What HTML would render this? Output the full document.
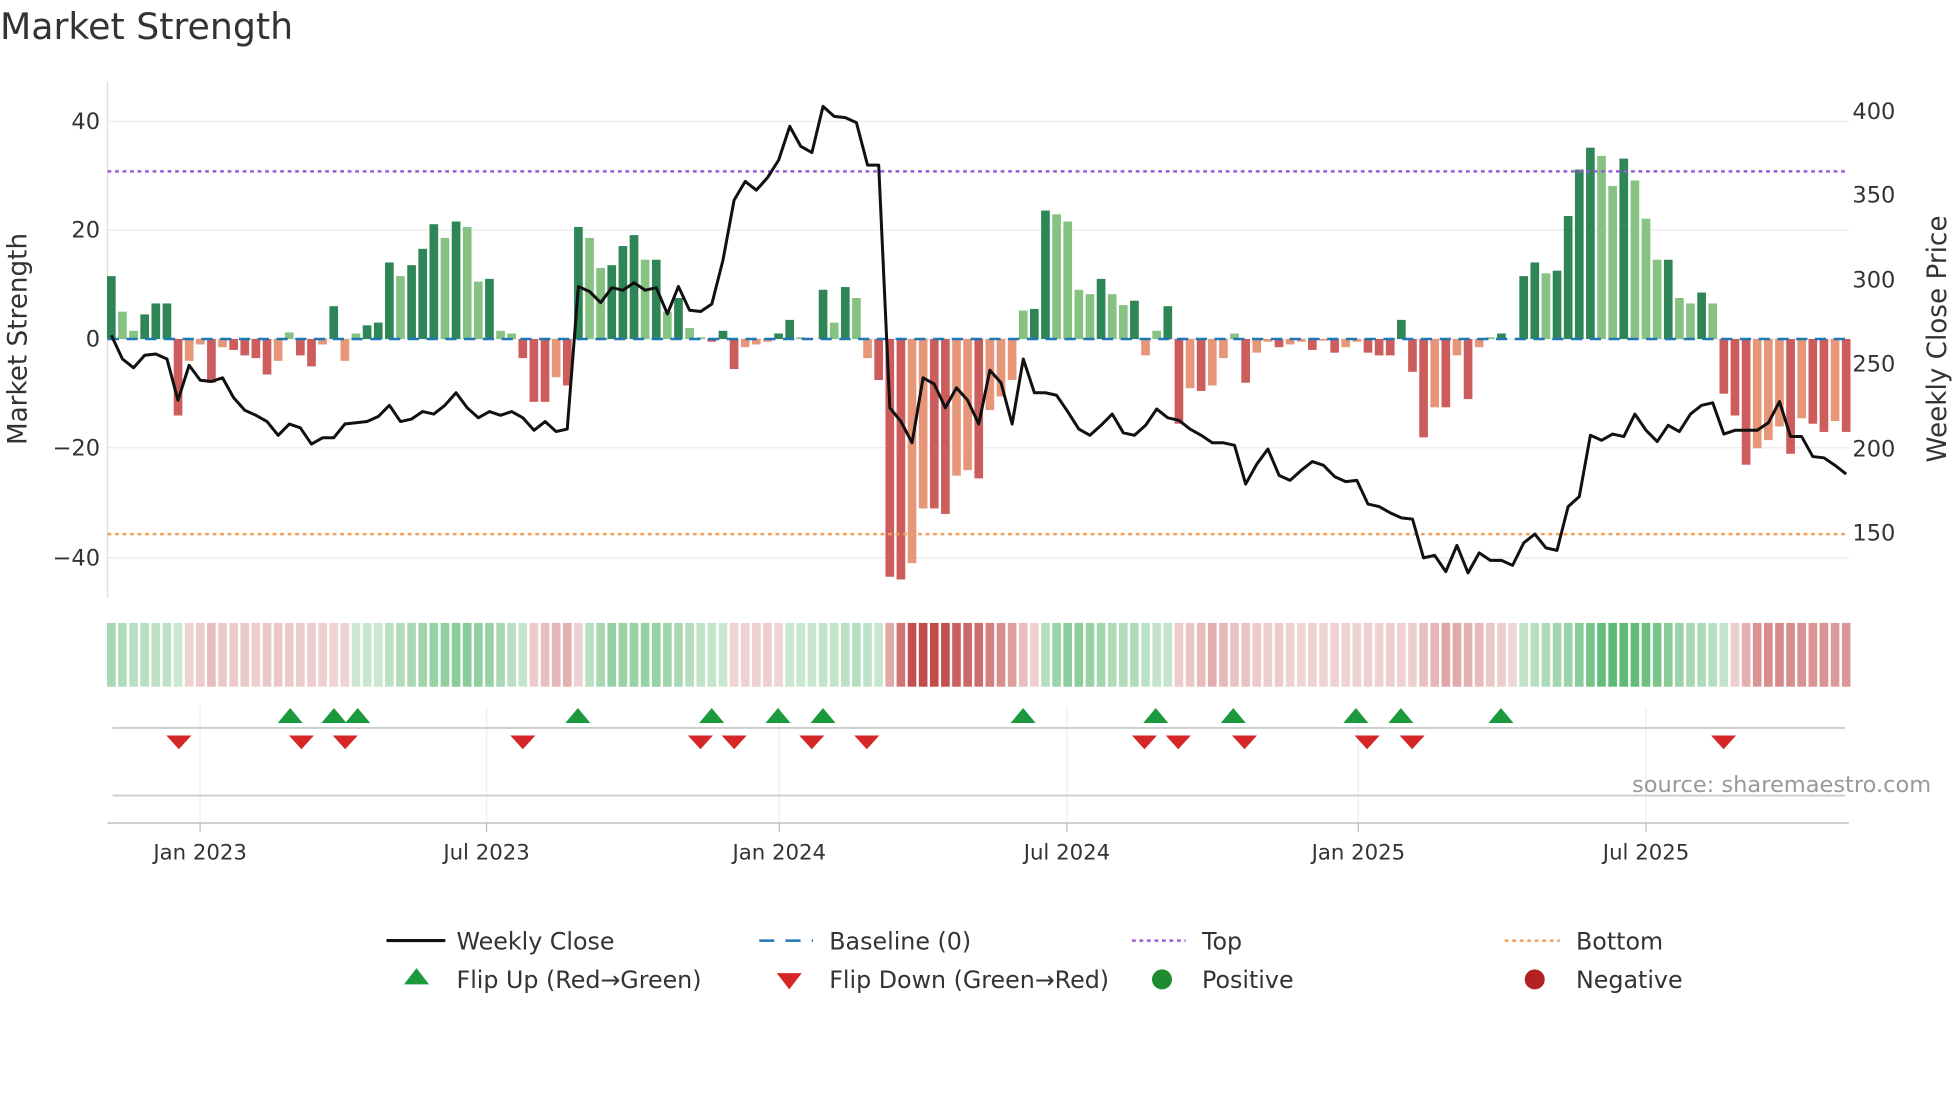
<!DOCTYPE html>
<html><head><meta charset="utf-8"><style>
html,body{margin:0;padding:0;background:#fff;width:1960px;height:1102px;overflow:hidden}
svg{display:block}
text{font-family:"DejaVu Sans","Liberation Sans",sans-serif;fill:#333}
</style></head><body>
<svg id="s" width="1960" height="1102" viewBox="0 0 1567 881" xmlns="http://www.w3.org/2000/svg">
<rect width="1567" height="881" fill="#fff"/>
<text x="0" y="31" font-size="29">Market Strength</text>
<g stroke="#ebebeb" stroke-width="1">
<line x1="86" x2="1478" y1="97" y2="97"/><line x1="86" x2="1478" y1="184" y2="184"/>
<line x1="86" x2="1478" y1="358" y2="358"/><line x1="86" x2="1478" y1="446" y2="446"/>
<line x1="86" x2="1478" y1="271" y2="271"/>
</g>
<line x1="86" x2="86" y1="65" y2="478" stroke="#ddd"/>
<g font-size="18" text-anchor="end">
<text x="80" y="103">40</text><text x="80" y="190">20</text><text x="80" y="277">0</text>
<text x="80" y="364">−20</text><text x="80" y="452">−40</text>
</g>
<g font-size="18">
<text x="1481" y="95">400</text><text x="1481" y="162">350</text><text x="1481" y="230">300</text>
<text x="1481" y="297">250</text><text x="1481" y="365">200</text><text x="1481" y="432">150</text>
</g>
<text transform="translate(21,271) rotate(-90)" font-size="21" text-anchor="middle">Market Strength</text>
<text transform="translate(1556,271) rotate(-90)" font-size="21" text-anchor="middle">Weekly Close Price</text>
<g id="bars"></g>
<line x1="86" x2="1478" y1="271" y2="271" stroke="#1f77b4" stroke-width="2" stroke-dasharray="9,6" id="base"/>
<line x1="86" x2="1478" y1="137" y2="137" stroke="#9b59d9" stroke-width="2" stroke-dasharray="3,3"/>
<line x1="86" x2="1478" y1="427" y2="427" stroke="#f0a05a" stroke-width="2" stroke-dasharray="3,3"/>
<polyline id="price" fill="none" stroke="#111" stroke-width="2.4" stroke-linejoin="round"/>
<g id="strip"></g>
<g stroke="#eee">
<line x1="160" x2="160" y1="565" y2="658"/><line x1="389" x2="389" y1="565" y2="658"/>
<line x1="623" x2="623" y1="565" y2="658"/><line x1="853" x2="853" y1="565" y2="658"/>
<line x1="1086" x2="1086" y1="565" y2="658"/><line x1="1316" x2="1316" y1="565" y2="658"/>
</g>
<line x1="90" x2="1475" y1="582" y2="582" stroke="#ccc" stroke-width="1.5"/>
<line x1="90" x2="1475" y1="636" y2="636" stroke="#ccc" stroke-width="1.5"/>
<line x1="86" x2="1478" y1="658" y2="658" stroke="#ccc" stroke-width="1.5"/>
<g stroke="#bbb"><line x1="160" x2="160" y1="658" y2="665"/><line x1="389" x2="389" y1="658" y2="665"/><line x1="623" x2="623" y1="658" y2="665"/><line x1="853" x2="853" y1="658" y2="665"/><line x1="1086" x2="1086" y1="658" y2="665"/><line x1="1316" x2="1316" y1="658" y2="665"/></g>
<g font-size="17" text-anchor="middle">
<text x="160" y="687">Jan 2023</text><text x="389" y="687">Jul 2023</text><text x="623" y="687">Jan 2024</text>
<text x="853" y="687">Jul 2024</text><text x="1086" y="687">Jan 2025</text><text x="1316" y="687">Jul 2025</text>
</g>
<g id="marks"></g>
<text x="1544" y="633" font-size="18" text-anchor="end" style="fill:#999">source: sharemaestro.com</text>
<g font-size="19">
<line x1="309" x2="356" y1="752" y2="752" stroke="#111" stroke-width="2.5"/><text x="365" y="759">Weekly Close</text>
<line x1="607" x2="650" y1="752" y2="752" stroke="#1f77b4" stroke-width="2" stroke-dasharray="12,9"/><text x="663" y="759">Baseline (0)</text>
<line x1="905" x2="948" y1="752" y2="752" stroke="#9b59d9" stroke-width="2" stroke-dasharray="3,3"/><text x="961" y="759">Top</text>
<line x1="1203" x2="1247" y1="752" y2="752" stroke="#f0a05a" stroke-width="2" stroke-dasharray="3,3"/><text x="1260" y="759">Bottom</text>
<path d="M333,774 L343,787 L323,787Z" fill="#1a9a3c"/><text x="365" y="790">Flip Up (Red→Green)</text>
<path d="M621,778 L641,778 L631,791Z" fill="#d62728"/><text x="663" y="790">Flip Down (Green→Red)</text>
<circle cx="929" cy="783" r="8" fill="#1e8c2e"/><text x="961" y="790">Positive</text>
<circle cx="1227" cy="783" r="8" fill="#b22222"/><text x="1260" y="790">Negative</text>
</g>
</svg>
<script>
var v=[11.5,5,1.5,4.5,6.5,6.5,-14,-4,-1,-8,-1.5,-2,-3,-3.5,-6.5,-4,1.2,-3,-5,-1,6,-4,1,2.5,3,14,11.5,13.5,16.5,21,18.5,21.5,20.5,10.5,11,1.5,1,-3.5,-11.5,-11.5,-7,-8.5,20.5,18.5,13,13.5,17,19,14.5,14.5,5,7.5,2,0.3,-0.5,1.5,-5.5,-1.5,-1,-0.5,1,3.5,0.3,0,9,3,9.5,7.5,-3.5,-7.5,-43.5,-44,-41,-31,-31,-32,-25,-24,-25.5,-13,-10.5,-7.5,5.2,5.5,23.5,22.8,21.5,9,8.2,11,8.2,6.2,7,-3,1.5,6,-15.5,-9,-9.5,-8.5,-3.5,1,-8,-2.5,-0.5,-1.5,-1,-0.5,-2,-0.3,-2.5,-1.5,-0.5,-2.5,-3,-3,3.5,-6,-18,-12.5,-12.5,-3,-11,-1.5,0.3,1,0,11.5,14,12,12.5,22.5,31,35,33.5,28,33,29,22,14.5,14.5,7.5,6.5,8.5,6.5,-10,-14,-23,-20,-18.5,-16,-21,-14.5,-15.5,-17,-15,-17];
var n=v.length,x0=89,x1=1476,st=(x1-x0)/(n-1),bw=st*0.78,ns="http://www.w3.org/2000/svg";
var B=document.getElementById('bars'),S=document.getElementById('strip');
function el(p,t,a){var e=document.createElementNS(ns,t);for(var k in a)e.setAttribute(k,a[k]);p.appendChild(e);return e;}
for(var i=0;i<n;i++){var x=x0+i*st,val=v[i],prev=i?v[i-1]:0;var up=Math.abs(val)>=Math.abs(prev);
var c=val>=0?(up?'#2e8656':'#86c282'):(up?'#cd5c5c':'#e8967a');var h=Math.abs(val)*4.37;
if(h>0.3)el(B,'rect',{x:x-bw/2,y:val>=0?271-h:271,width:bw,height:h,fill:c});
var a=0,cnt=0;for(var j=Math.max(0,i-3);j<=i;j++){a+=v[j];cnt++;}a/=cnt;
var t=Math.min(1,Math.abs(a)/35),col;
if(a>=0){col='rgb('+Math.round(205-120*t)+','+Math.round(232-50*t)+','+Math.round(210-100*t)+')';}
else{col='rgb('+Math.round(240-45*t)+','+Math.round(215-140*t)+','+Math.round(215-140*t)+')';}
el(S,'rect',{x:x-st/2+1,y:498,width:st-2,height:51,fill:col});}
var p=[268,287,294,284,283,287,320,292,304,305,302,318,328,332,337,348,339,342,355,350,350,339,338,337,333,324,337,335,329,331,324,314,326,334,329,332,329,334,344,337,345,343,229,233,242,230,232,226,232,230,251,229,248,249,243,208,160,145,152,142,128,101,117,122,85,93,94,98,132,132,326,337,354,302,307,326,310,320,339,296,306,339,287,314,314,316,329,343,348,340,331,346,348,340,327,334,336,343,348,354,354,356,387,371,359,380,384,376,369,372,381,385,384,403,405,410,414,415,446,444,457,436,458,442,448,448,452,434,427,438,440,405,397,348,352,347,349,331,344,353,340,345,331,324,322,347,344,344,344,338,321,349,349,365,366,372,379];
var ps=(x1-x0)/(p.length-1),pts=[];for(var i=0;i<p.length;i++)pts.push((x0+i*ps).toFixed(1)+','+p[i]);
document.getElementById('price').setAttribute('points',pts.join(' '));
var M=document.getElementById('marks');
[232,267,286,462,569,622,658,818,924,986,1084,1120,1200].forEach(function(x){el(M,'path',{d:'M'+x+',566 L'+(x+10)+',578 L'+(x-10)+',578Z',fill:'#1a9a3c'});});
[143,241,276,418,560,587,649,693,915,942,995,1093,1129,1378].forEach(function(x){el(M,'path',{d:'M'+(x-10)+',588 L'+(x+10)+',588 L'+x+',599Z',fill:'#d62728'});});
</script>
</body></html>
